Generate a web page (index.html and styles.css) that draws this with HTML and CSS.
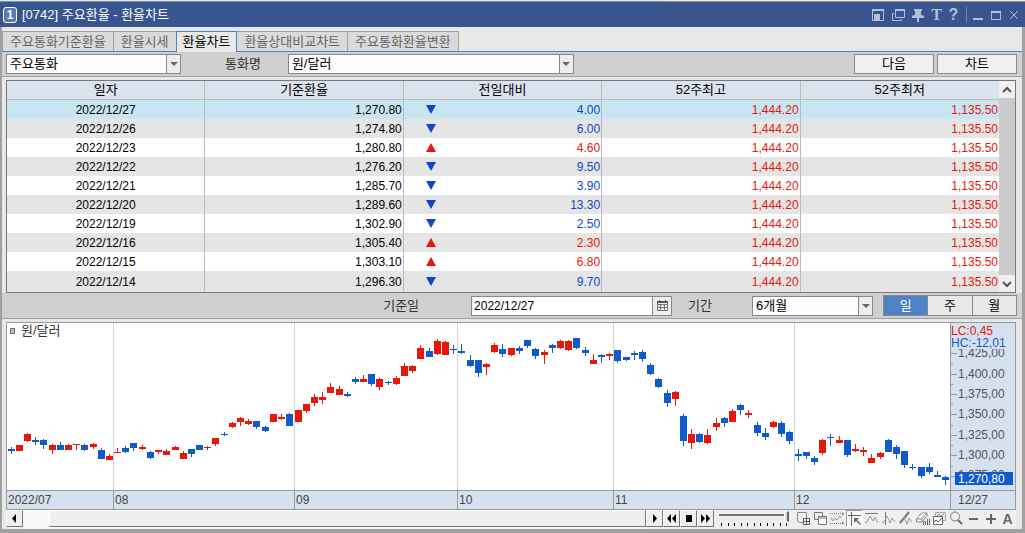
FILE: index.html
```html
<!DOCTYPE html>
<html lang="ko">
<head>
    <meta charset="UTF-8">
    <title>[0742] 주요환율 - 환율차트</title>
    <link rel="stylesheet" href="styles.css">
</head>
<body>
<div class="backdrop"></div>
<!--제목 표시줄-->
<header class="titlebar">
    <span class="win-no">1</span>
    <h1>[0742] 주요환율 - 환율차트</h1>
    <div class="win-tools">
        <button aria-label="화면 축소"><svg width="14" height="14"><path d="M1.500 1.500h11v11h-11z" fill="none" stroke="currentColor"/><path d="M1 1h12v2H1zM3 6h6v6H3z" fill="currentColor"/></svg></button>
        <button aria-label="화면 복사"><svg width="14" height="14"><path d="M4.500 2.500h9v7h-9zM3 5.500H1.500v7h9V11" fill="none" stroke="currentColor"/><path d="M4 1h10v2H4z" fill="currentColor"/></svg></button>
        <button aria-label="고정"><svg width="14" height="14"><path d="M3 1h8v2h-1v4h1l2 1v2H8v4H6v-4H1V8l2-1h1V3H3z" fill="currentColor"/></svg></button>
        <button class="glyph serif" aria-label="글자">T</button>
        <button class="glyph" aria-label="도움말">?</button>
    </div>
    <div class="win-ctrl">
        <button aria-label="최소화"><svg width="14" height="14"><path d="M2 10h10v2H2z" fill="currentColor"/></svg></button>
        <button aria-label="최대화"><svg width="14" height="14"><path d="M2.500 3.500h9v8h-9z" fill="none" stroke="currentColor"/><path d="M2 3h10v2H2z" fill="currentColor"/></svg></button>
        <button aria-label="닫기"><svg width="14" height="14"><path d="M3 3l8 8M11 3l-8 8" stroke="currentColor"/></svg></button>
    </div>
</header>
<main class="window">
    <!--탭-->
    <nav class="tabs">
        <button>주요통화기준환율</button>
        <button>환율시세</button>
        <button class="on">환율차트</button>
        <button>환율상대비교차트</button>
        <button>주요통화환율변환</button>
    </nav>
    <!--조회 조건-->
    <div class="bar">
        <span class="combo combo-group">
            <select aria-label="통화 구분"><option>주요통화</option></select><i></i>
        </span>
        <label class="lbl-cur" for="cur">통화명</label>
        <span class="combo combo-cur">
            <select id="cur"><option>원/달러</option></select><i></i>
        </span>
        <span class="bar-btns">
            <button class="btn">다음</button>
            <button class="btn">차트</button>
        </span>
    </div>
    <!--환율 목록-->
    <section class="grid">
        <div class="grid-body">
            <table>
                <colgroup>
                    <col class="c-wide"><col class="c-wide"><col class="c-mark"><col class="c-diff"><col class="c-wide"><col class="c-wide">
                </colgroup>
                <thead>
                <tr><th>일자</th><th>기준환율</th><th colspan="2">전일대비</th><th>52주최고</th><th>52주최저</th></tr>
                </thead>
                <tbody>
                <tr class="down sel"><td>2022/12/27</td><td>1,270.80</td><td><i></i></td><td>4.00</td><td>1,444.20</td><td>1,135.50</td></tr>
                <tr class="down"><td>2022/12/26</td><td>1,274.80</td><td><i></i></td><td>6.00</td><td>1,444.20</td><td>1,135.50</td></tr>
                <tr class="up"><td>2022/12/23</td><td>1,280.80</td><td><i></i></td><td>4.60</td><td>1,444.20</td><td>1,135.50</td></tr>
                <tr class="down"><td>2022/12/22</td><td>1,276.20</td><td><i></i></td><td>9.50</td><td>1,444.20</td><td>1,135.50</td></tr>
                <tr class="down"><td>2022/12/21</td><td>1,285.70</td><td><i></i></td><td>3.90</td><td>1,444.20</td><td>1,135.50</td></tr>
                <tr class="down"><td>2022/12/20</td><td>1,289.60</td><td><i></i></td><td>13.30</td><td>1,444.20</td><td>1,135.50</td></tr>
                <tr class="down"><td>2022/12/19</td><td>1,302.90</td><td><i></i></td><td>2.50</td><td>1,444.20</td><td>1,135.50</td></tr>
                <tr class="up"><td>2022/12/16</td><td>1,305.40</td><td><i></i></td><td>2.30</td><td>1,444.20</td><td>1,135.50</td></tr>
                <tr class="up"><td>2022/12/15</td><td>1,303.10</td><td><i></i></td><td>6.80</td><td>1,444.20</td><td>1,135.50</td></tr>
                <tr class="down last"><td>2022/12/14</td><td>1,296.30</td><td><i></i></td><td>9.70</td><td>1,444.20</td><td>1,135.50</td></tr>
                </tbody>
            </table>
        </div>
        <div class="vscroll">
            <button aria-label="위로"><svg width="10" height="8"><path d="M1 6l4-4 4 4" fill="none" stroke="#555" stroke-width="2"/></svg></button>
            <div class="vthumb"></div>
            <button aria-label="아래로"><svg width="10" height="8"><path d="M1 2l4 4 4-4" fill="none" stroke="#555" stroke-width="2"/></svg></button>
        </div>
    </section>
    <!--차트 조건-->
    <div class="bar bar-chart">
        <label class="lbl-date" for="date">기준일</label>
        <span class="datebox">
            <input id="date" type="text" value="2022/12/27">
            <button aria-label="달력"><svg width="11" height="11"><path d="M.5 1.500h10v9H.5zM1 4.500h9M1 7.500h9M3.500 4v6M7.500 4v6" fill="none" stroke="#777"/><path d="M0 1h11v2H0zM2 0h1v2H2zM8 0h1v2H8z" fill="#555"/></svg></button>
        </span>
        <label class="lbl-term" for="term">기간</label>
        <span class="combo combo-term">
            <select id="term"><option>6개월</option></select><i></i>
        </span>
        <span class="seg">
            <button class="on">일</button><button>주</button><button>월</button>
        </span>
    </div>
    <!--차트-->
    <section class="chart">
        <div class="plot">
            <div class="legend"><i></i>원/달러</div>
            <svg id="candles" viewBox="7 3 943 167" preserveAspectRatio="none" shape-rendering="crispEdges"></svg>
        </div>
        <div class="axis">
            <svg width="64" height="167" viewBox="951 323 64 167">
                <path d="M951 353.500h6M951 374.500h6M951 394.500h6M951 414.500h6M951 435.500h6M951 455.500h6M951 476.500h6M951 364.500h2M951 384.500h2M951 404.500h2M951 425.500h2M951 445.500h2M951 466.500h2" stroke="#999"/>
                <g class="scale">
                    <text x="958" y="357">1,425,00</text>
                    <text x="958" y="378">1,400,00</text>
                    <text x="958" y="398">1,375,00</text>
                    <text x="958" y="418">1,350,00</text>
                    <text x="958" y="439">1,325,00</text>
                    <text x="958" y="459">1,300,00</text>
                    <text x="958" y="479">1,275,00</text>
                </g>
                <rect x="951" y="323" width="64" height="26" fill="#d6e1ef"/>
                <text x="951" y="335" fill="#e6180a">LC:0,45</text>
                <text x="951" y="347" fill="#115acb">HC:-12,01</text>
                <rect x="955" y="472" width="58" height="13" fill="#115acb"/>
                <text x="958" y="483" fill="#fff">1,270,80</text>
            </svg>
        </div>
        <div class="months">
            <span>2022/07</span><span>08</span><span>09</span><span>10</span><span>11</span><span>12</span>
        </div>
        <div class="today">12/27</div>
    </section>
    <!--하단 도구-->
    <footer class="tools">
        <div class="hscroll">
            <button class="raised" aria-label="왼쪽"><svg width="9" height="9"><path d="M6 0v9L2 4.500z"/></svg></button>
            <div class="track"><div class="raised thumb"></div></div>
        </div>
        <div class="player">
            <button class="raised" aria-label="오른쪽"><svg width="9" height="9"><path d="M3 0v9l4-4.500z"/></svg></button>
            <button class="raised" aria-label="되감기"><svg width="9" height="9"><path d="M4 0v9L0 4.500zM9 0v9L5 4.500z"/></svg></button>
            <button class="raised" aria-label="정지"><svg width="9" height="9"><path d="M2 1h6v7H2z"/></svg></button>
            <button class="raised" aria-label="빨리 감기"><svg width="9" height="9"><path d="M0 0v9l4-4.500zM5 0v9l4-4.500z"/></svg></button>
        </div>
        <div class="slider">
            <input type="range" min="1" max="11" value="11" aria-label="속도">
            <svg width="70" height="3"><path d="M2.500 0v3M9.500 0v3M15.500 0v3M22.500 0v3M28.500 0v3M35.500 0v3M41.500 0v3M48.500 0v3M54.500 0v3M61.500 0v3M67.500 0v3" stroke="#000"/></svg>
        </div>
        <div class="icons">
            <button aria-label="차트 추가"><svg width="15" height="15"><path d="M7 11.500H3L1.500 10V1.500h9V7" fill="none" stroke="#888"/><path d="M7.500 7.500h6v6h-6zM10.500 7v7M7 10.500h7" fill="#fff" stroke="#555"/></svg></button>
            <button aria-label="차트 겹치기"><svg width="15" height="15"><path d="M1.500 1.500h8v7h-8z" fill="none" stroke="#777"/><path d="M5.500 5.500h8v8h-8z" fill="#fff" stroke="#777"/><path d="M6 6h7v2H6z" fill="#bbb"/></svg></button>
            <button aria-label="구간"><svg width="15" height="15"><path d="M0 2.500h12M0 12.500h12" stroke="#777" stroke-dasharray="1 1"/><path d="M1 7l2 3 2-3 2 2 3-4 1 2" fill="none" stroke="#999"/><path d="M12 1v4l2-2zM12 10v4l2-2z" fill="#777"/></svg></button>
            <button class="on" aria-label="십자선"><svg width="15" height="15"><path d="M1 4.500h13M4.500 1v14" stroke="#666"/><path d="M7 7h5l-2 2 4 4-1 1-4-4-2 2z" fill="#666"/></svg></button>
            <button aria-label="수평선"><svg width="15" height="15"><path d="M1 2.500h13" stroke="#777"/><path d="M1 12l2-1 3-6 3 5 2-4 2 5 1 0" fill="none" stroke="#999"/></svg></button>
            <button aria-label="수직선"><svg width="15" height="15"><path d="M4.500 1v13" stroke="#777"/><path d="M1 12l2-1 3-6 3 7 2-5 3 4" fill="none" stroke="#999"/></svg></button>
            <button aria-label="추세선"><svg width="15" height="15"><path d="M2 12L11 1" stroke="#777" stroke-width="2"/><path d="M1 11l2-1 3-4 3 7 2-6 3 4" fill="none" stroke="#999"/></svg></button>
            <button aria-label="모두 지우기"><svg width="15" height="15"><path d="M1.500 8l5-6h5.500L7 8zM1.500 8v3H7l5-6V2M7 8v3" fill="#fff" stroke="#888"/><path d="M8.500 14v-3l1-1 1 1v3M12.500 8v6M14.500 8v6" fill="none" stroke="#666"/></svg></button>
            <button aria-label="차트 저장"><svg width="15" height="15"><path d="M3.500 1.500h10v8h-10z" fill="#eee" stroke="#aaa"/><path d="M5 5l2-2 2 2 3-2" fill="none" stroke="#999"/><path d="M1.500 5.500h9v8h-9z" fill="#fff" stroke="#666"/><path d="M2 11l2-2 2 2 4-4" fill="none" stroke="#555"/></svg></button>
            <button aria-label="돋보기"><svg width="15" height="15"><circle cx="6" cy="5.500" r="4.500" fill="none" stroke="#777"/><path d="M9 9l4 4" stroke="#666" stroke-width="2"/></svg></button>
            <button aria-label="축소"><svg width="15" height="15"><path d="M3 7h9v2H3z" fill="#666"/></svg></button>
            <button aria-label="확대"><svg width="15" height="15"><path d="M3 7h10v2H3zM7 3h2v10H7z" fill="#666"/></svg></button>
            <button class="glyph" aria-label="글자 크기">A</button>
        </div>
    </footer>
</main>
<script src="chart.js"></script>
</body>
</html>
```
FILE: styles.css
```css
*{
    box-sizing: border-box;
}
body{
    margin: 0;
    min-height: 100vh;
    display: flex;
    flex-direction: column;
    font-family: "Liberation Sans", "Noto Sans CJK KR", sans-serif;
    font-size: 12px;
    line-height: 16px;
    color: #000;
    background-color: #a0a0a0;
}
button, input, select{
    font-family: inherit;
    font-size: 12px;
    line-height: 16px;
    color: inherit;
    margin: 0;
    padding: 0;
    border: 0;
    border-radius: 0;
    background: none;
}
svg{
    display: block;
}
.backdrop{
    height: 2px;
    background: linear-gradient(90deg, #dce6f0 65%, #f3ead6 65%);
    border-bottom: 1px solid #8a8f98;
}
/* 제목 표시줄 */
.titlebar{
    display: flex;
    align-items: center;
    height: 25px;
    padding: 0 4px 0 3px;
    color: #fff;
    background-color: #38558f;
}
.win-no{
    width: 14px;
    height: 16px;
    border: 1px solid #fff;
    border-radius: 3px;
    background-color: #5b78b2;
    font-size: 12px;
    font-weight: bold;
    line-height: 14px;
    text-align: center;
}
.titlebar h1{
    flex: 1;
    margin: 0 0 0 5px;
    font-size: 13px;
    font-weight: normal;
}
.win-tools, .win-ctrl{
    display: flex;
    align-items: center;
    color: #b4c0da;
}
.win-tools{
    gap: 6px;
    padding-right: 7px;
    border-right: 1px solid #6f86b3;
}
.win-ctrl{
    gap: 4px;
    padding-left: 4px;
}
.win-tools .glyph{
    width: 11px;
    font-size: 16px;
    font-weight: bold;
}
.win-tools .serif{
    font-family: "Liberation Serif", serif;
}
.window{
    flex: 1;
    margin: 0 3px 4px 2px;
    background-color: #e8e8e8;
}
/* 탭 */
.tabs{
    display: flex;
    padding-top: 4px;
    height: 25px;
    border-bottom: 1px solid #4f82bf;
}
.tabs button{
    height: 20px;
    padding: 0 7px;
    border: 1px solid #a0a0a0;
    border-width: 1px 1px 0 0;
    background-color: #dadada;
    color: #666;
    font-size: 13px;
}
.tabs button:first-child{
    border-left-width: 1px;
}
.tabs .on{
    height: 21px;
    margin-left: -1px;
    padding: 0 6px;
    border-color: #4f82bf;
    border-left-width: 1px;
    background-color: #e8e8e8;
    color: #000;
}
/* 조건 줄 */
.bar{
    display: flex;
    align-items: center;
    height: 25px;
    padding: 0 5px 0 4px;
    border-bottom: 1px solid #a0a0a0;
    background-color: #d0d0d0;
    font-size: 13px;
    color: #333;
}
.combo{
    display: grid;
    height: 20px;
    border: 1px solid #888;
    background-color: #fbfcfe;
    color: #000;
}
.combo select, .combo i{
    grid-area: 1 / 1;
}
.combo select{
    appearance: none;
    width: 100%;
    height: 18px;
    padding: 0 16px 0 3px;
    font-size: 13px;
}
.combo i{
    display: flex;
    align-items: center;
    justify-content: center;
    justify-self: end;
    width: 14px;
    border-left: 1px solid #888;
    background-color: #ededed;
    pointer-events: none;
}
.combo i::before{
    content: "";
    border: 4px solid transparent;
    border-top-color: #666;
    border-bottom-width: 0;
}
.combo-group{
    width: 175px;
}
.lbl-cur{
    margin: 0 27px 0 44px;
}
.combo-cur{
    width: 286px;
}
.bar-btns{
    display: flex;
    gap: 3px;
    margin-left: auto;
}
.btn{
    width: 80px;
    height: 20px;
    border: 1px solid #888;
    background-color: #f0f0f0;
    color: #000;
    font-size: 13px;
}
/* 환율 목록 */
.grid{
    display: flex;
    margin: 3px 6px 0 4px;
    border: 1px solid #777;
    background-color: #fff;
}
.grid-body{
    flex: 1;
}
.grid table{
    width: 100%;
    table-layout: fixed;
    border-collapse: separate;
    border-spacing: 0;
}
.c-wide{
    width: 20%;
}
.c-mark{
    width: 5%;
}
.c-diff{
    width: 15%;
}
.grid th, .grid td{
    height: 19px;
    padding: 0 1px;
    border-right: 1px solid #bbb;
    text-align: right;
    line-height: 18px;
}
.grid th{
    border-bottom: 1px solid #bbb;
    background-color: #dbe3ee;
    font-size: 13px;
    font-weight: normal;
    text-align: center;
}
.grid td:first-child{
    text-align: center;
}
.grid td:nth-child(3){
    border-right: 0;
}
.grid th:last-child, .grid td:last-child{
    border-right: 0;
}
.grid tr:nth-child(even) td{
    background-color: #e5e5e5;
}
.grid .sel td{
    background-color: #c8e6f2;
}
.grid .last td{
    height: 21px;
}
.grid td:nth-child(n+5), .up td:nth-child(4){
    color: #e6180a;
}
.down td:nth-child(4){
    color: #1046c8;
}
.grid td i{
    display: block;
    width: 10px;
    margin-left: 21px;
    border: 0 solid transparent;
    border-width: 0 5px;
}
.grid .up i{
    border-bottom: 9px solid #e6180a;
}
.grid .down i{
    border-top: 9px solid #1046c8;
}
.vscroll{
    display: flex;
    flex-direction: column;
    width: 16px;
    background-color: #f0f0f0;
}
.vscroll button{
    display: flex;
    align-items: center;
    justify-content: center;
    height: 17px;
}
.vthumb{
    flex: 1;
    background-color: #cbcbcb;
}
/* 차트 조건 */
.bar-chart{
    height: 26px;
    margin-bottom: 3px;
}
.lbl-date{
    margin: 0 52px 0 auto;
}
.datebox{
    display: flex;
    width: 201px;
    height: 20px;
    border: 1px solid #888;
    background-color: #fff;
}
.datebox input{
    flex: 1;
    min-width: 0;
    padding: 0 2px;
    color: #000;
}
.datebox button{
    display: flex;
    align-items: center;
    justify-content: center;
    width: 19px;
    border-left: 1px solid #888;
    background-color: #ededed;
}
.lbl-term{
    margin: 0 40px 0 16px;
}
.combo-term{
    width: 121px;
}
.seg{
    display: flex;
    width: 134px;
    height: 21px;
    margin-left: 10px;
    border: 1px solid #888;
}
.seg button{
    flex: 1;
    background-color: #e8e8e8;
    color: #000;
    font-size: 13px;
}
.seg button + button{
    border-left: 1px solid #888;
}
.seg .on{
    background-color: #4f82c6;
    color: #fff;
}
/* 차트 */
.chart{
    display: grid;
    grid-template-columns: 1fr 65px;
    grid-template-rows: 167px 19px;
    margin: 0 6px 0 4px;
    border: 1px solid #999;
    background-color: #fff;
}
.plot{
    display: grid;
}
.plot > *{
    grid-area: 1 / 1;
}
.plot svg{
    width: 100%;
    height: 167px;
}
.legend{
    display: flex;
    align-items: center;
    align-self: start;
    gap: 6px;
    padding: 0 3px;
    font-size: 13px;
    color: #333;
}
.legend i{
    width: 5px;
    height: 6px;
    border: 1px solid #777;
    background-color: #bbb;
}
.axis, .today{
    border-left: 1px solid #999;
    background-color: #d6e1ef;
}
.scale{
    fill: #555;
}
.months, .today{
    border-top: 1px solid #999;
    line-height: 18px;
    color: #444;
}
.months{
    display: grid;
    grid-template-columns: 106fr 181fr 163fr 156fr 181fr 156fr;
    background-color: #d6e1ef;
}
.months span{
    padding-left: 1px;
}
.months span + span{
    border-left: 1px solid #999;
}
.today{
    padding-left: 7px;
}
/* 하단 도구 */
.tools{
    display: flex;
    height: 19px;
    margin: 0 6px 0 4px;
    background-color: #efefef;
}
.tools button{
    display: flex;
    align-items: center;
    justify-content: center;
    width: 17px;
    height: 17px;
}
.tools .raised{
    border: 1px solid #fff;
    border-right-color: #777;
    border-bottom-color: #777;
    background-color: #efefef;
}
.hscroll{
    display: flex;
    flex: 1;
}
.track{
    flex: 1;
    padding-left: 26px;
    background-color: #f8f8f8;
}
.thumb{
    height: 17px;
}
.player{
    display: flex;
}
.slider{
    display: flex;
    flex-direction: column;
    width: 70px;
    margin: 0 6px 0 5px;
}
.slider input{
    appearance: none;
    width: 70px;
    height: 13px;
    background: linear-gradient(#777, #777) center 4px / 100% 2px no-repeat;
}
.slider input::-webkit-slider-thumb{
    appearance: none;
    width: 5px;
    height: 11px;
    border: 1px solid #fff;
    border-right: 2px solid #666;
    background-color: #ddd;
}
.icons{
    display: flex;
}
.icons .on{
    border: 1px solid #999;
    border-right-color: #fff;
    border-bottom-color: #fff;
    background-color: #fafafa;
}
.icons .glyph{
    font-size: 14px;
    font-weight: bold;
    color: #666;
}
```
FILE: chart.js
```js
// [양봉/음봉, x, 고가, 몸통 위, 몸통 아래, 저가]
const UP = '#e6180a', DOWN = '#115acb';
const candles = [
    [0,8,127,129,131,134],[1,16,125,125,131,131],[1,24,113,114,121,122],[0,32,117,120,122,125],
    [0,40,119,120,125,129],[1,49,124,125,130,134],[0,57,122,125,130,130],[1,65,124,125,130,130],
    [1,73,124,124,125,130],[0,81,124,125,130,131],[1,90,123,124,127,129],[0,98,128,130,139,139],
    [1,106,134,136,140,140],[1,114,128,132,133,133],[0,122,126,128,132,133],[0,130,123,123,128,131],
    [1,139,125,127,129,130],[0,147,131,132,138,139],[1,155,130,130,132,134],[1,163,129,131,135,135],
    [1,172,126,127,130,130],[1,180,131,133,139,139],[0,188,129,129,134,137],[0,196,125,125,130,130],
    [1,204,126,127,128,130],[1,212,118,118,124,126],[0,221,112,114,115,116],[1,229,102,103,107,108],
    [1,237,97,98,102,106],[1,245,99,101,104,105],[0,253,101,101,107,109],[0,262,106,107,111,112],
    [1,270,94,94,102,102],[1,278,94,97,99,100],[0,286,93,94,106,106],[1,295,90,90,102,102],
    [1,303,84,84,91,93],[1,311,74,77,83,86],[1,319,72,77,80,84],[1,327,63,67,73,73],
    [1,336,66,69,75,75],[0,344,72,74,76,77],[0,352,57,59,62,64],[1,360,55,59,62,62],
    [0,368,54,54,64,66],[1,376,58,59,67,70],[0,385,61,62,63,65],[1,393,56,58,64,65],
    [1,401,43,46,56,56],[1,409,45,46,51,53],[1,417,25,28,39,39],[0,426,28,31,37,37],
    [1,434,19,21,34,35],[1,442,21,22,35,35],[0,450,25,29,30,34],[0,458,24,31,33,34],
    [0,467,35,40,46,47],[0,475,40,40,53,57],[1,483,43,44,47,55],[1,491,23,25,32,33],
    [0,499,24,29,34,37],[1,508,28,28,35,36],[0,516,26,28,31,34],[0,524,20,20,26,28],
    [0,532,28,29,36,39],[1,541,30,32,35,44],[0,549,24,25,28,33],[1,557,20,21,28,29],
    [1,565,20,21,30,31],[0,573,18,18,28,29],[0,582,27,30,33,36],[1,590,34,40,44,44],
    [0,598,34,35,37,43],[1,606,33,34,36,40],[0,614,30,30,41,43],[0,623,37,37,40,41],
    [0,631,31,33,35,40],[0,639,30,32,39,42],[0,647,43,45,54,55],[0,655,58,59,67,68],
    [0,664,70,73,83,87],[1,672,71,72,79,86],[0,680,94,96,121,126],[1,688,109,114,123,129],
    [0,696,113,114,122,123],[1,704,109,115,123,124],[1,713,98,103,107,111],[0,721,97,98,103,107],
    [1,729,89,91,102,102],[0,737,84,85,90,95],[1,745,90,93,95,98],[0,754,102,105,113,116],
    [0,762,108,113,117,120],[1,770,101,102,107,108],[0,778,101,103,114,117],[0,786,111,112,121,124],
    [0,795,129,134,136,141],[0,803,132,132,136,139],[0,811,136,138,142,145],[1,819,119,120,133,135],
    [0,827,114,117,118,126],[1,836,116,120,123,123],[0,844,120,120,135,137],[1,852,124,129,131,132],
    [1,860,127,130,132,136],[1,868,134,138,143,143],[1,877,132,133,137,139],[0,885,119,120,132,132],
    [0,893,125,127,134,139],[0,901,131,131,145,148],[0,909,144,147,148,150],[0,918,147,147,156,158],
    [0,926,143,147,152,154],[0,934,151,155,157,157],[0,942,156,157,160,165]
];
const svg = document.getElementById('candles');

function addRect(x, y, w, h, color){
    const r = document.createElementNS('http://www.w3.org/2000/svg', 'rect');
    r.setAttribute('x', x);
    r.setAttribute('y', y);
    r.setAttribute('width', w);
    r.setAttribute('height', h);
    r.setAttribute('fill', color);
    svg.appendChild(r);
}

// 월 구분선
[113, 294, 457, 613, 794].forEach((x) => addRect(x, 3, 1, 167, '#d3d3d3'));

candles.forEach(([up, x, high, top, bottom, low]) => {
    const color = up ? UP : DOWN;
    addRect(x + 3, high, 1, low - high, color);
    addRect(x, top, 7, bottom - top, color);
});
```
